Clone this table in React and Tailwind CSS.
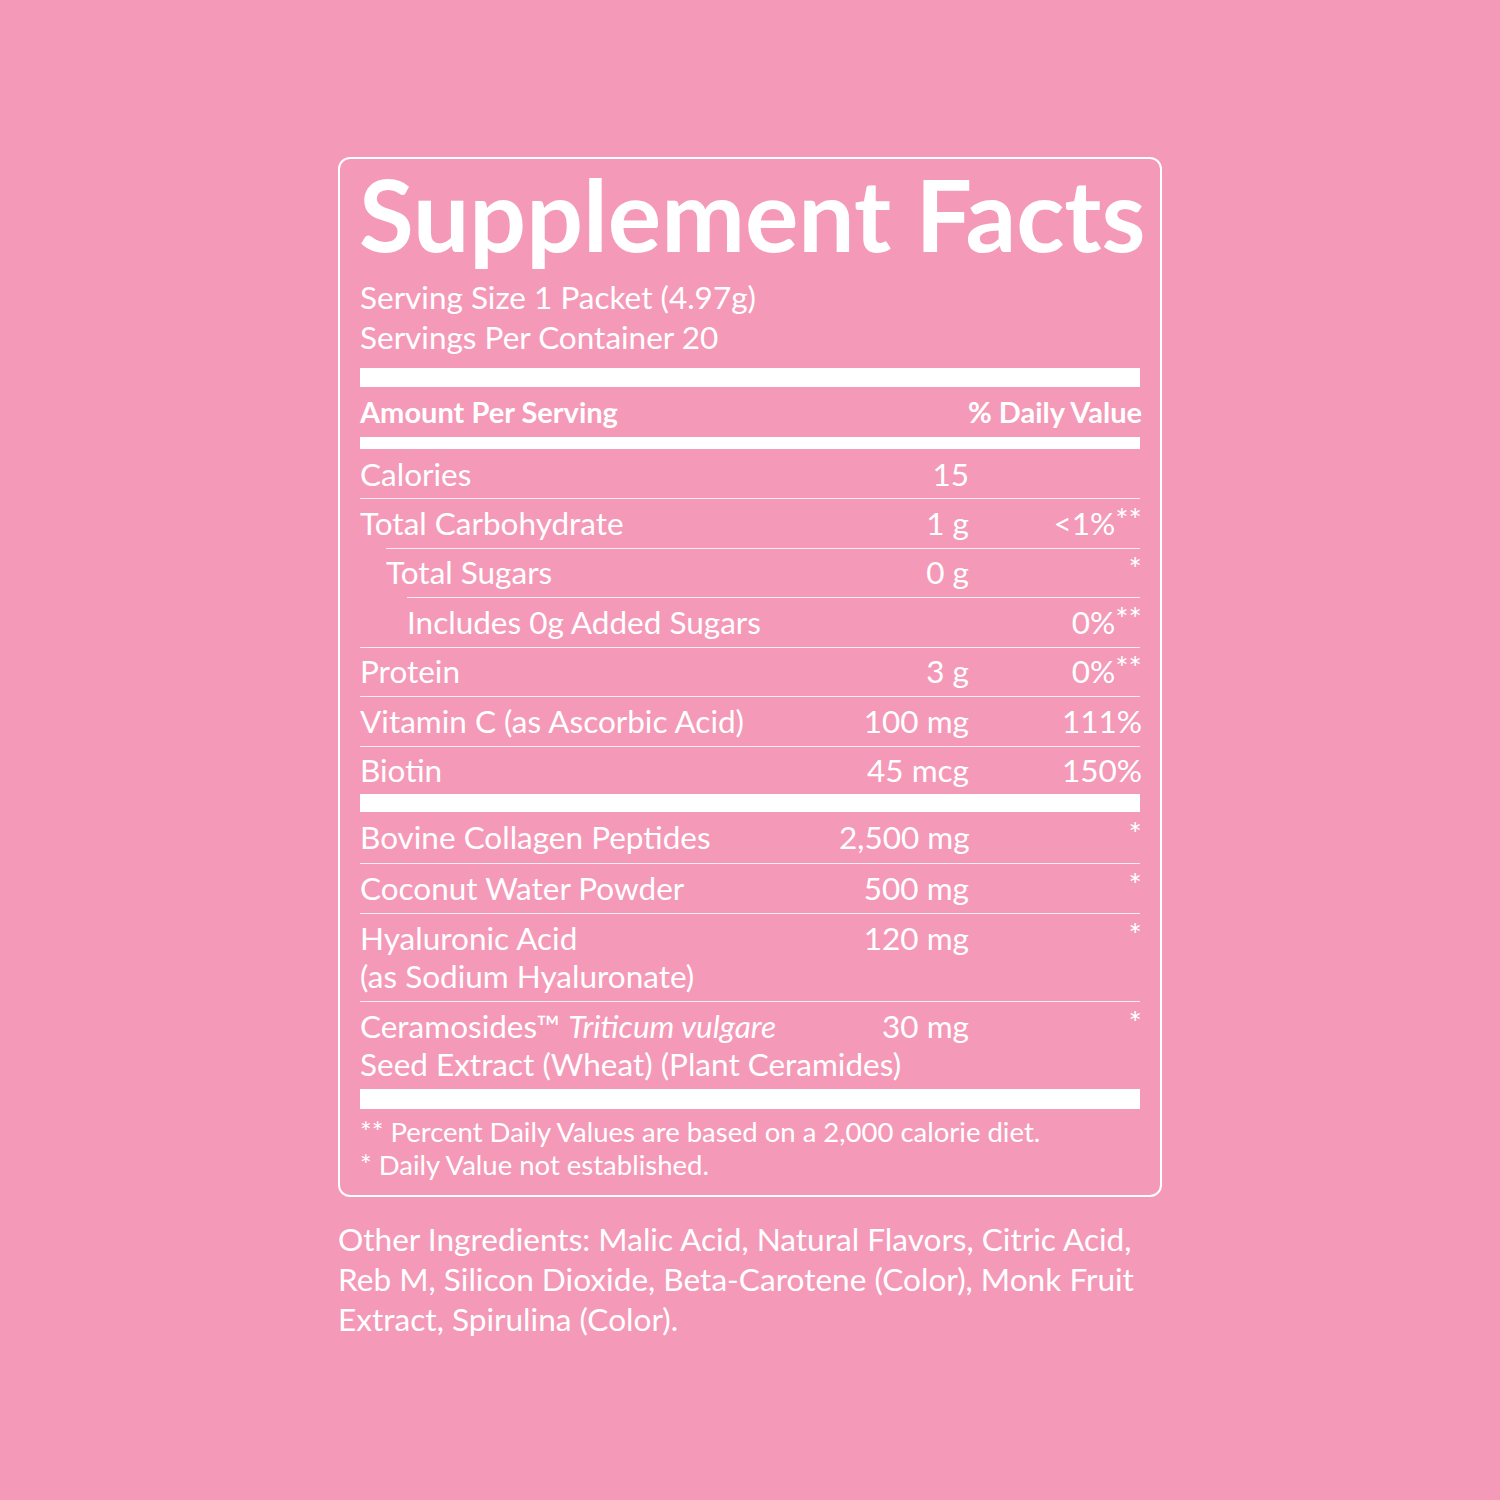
import React from 'react';

const ROWS = [
  { name: 'Total Carbohydrate', amount: '1 g', dv: '<1%', star: '**', indent: '' },
  { name: 'Total Sugars', amount: '0 g', dv: '', star: '*', indent: 'ml-[26px]' },
  { name: 'Includes 0g Added Sugars', amount: '', dv: '0%', star: '**', indent: 'ml-[47px]' },
  { name: 'Protein', amount: '3 g', dv: '0%', star: '**', indent: '' },
  { name: 'Vitamin C (as Ascorbic Acid)', amount: '100 mg', dv: '111%', star: '', indent: '' },
];

const Row = ({ name, amount, dv, star, className = '' }) => (
  <div className={`flex items-center ${className}`}>
    <div className="flex-1 min-w-0 whitespace-nowrap">{name}</div>
    <div className="w-[130px] text-right whitespace-nowrap">{amount}</div>
    <div className="w-[173px] -mr-[2px] text-right whitespace-nowrap">
      {dv}
      {star && <span className="relative -top-[4px]">{star}</span>}
    </div>
  </div>
);

export default function App() {
  return (
    <div
      className="w-[1500px] h-[1500px] bg-[#f49ab8] text-white flex justify-center pt-[157px]"
      style={{ fontFamily: 'Lato, "Liberation Sans", sans-serif' }}
    >
      <div className="w-[824px]">
        {/* ── Facts panel ── */}
        <div className="border-2 border-white rounded-[12px] px-[20px] pb-[14px]">
          <h1 className="text-[100px] font-bold leading-[100px] pt-[4px] h-[116px] -ml-[1px] whitespace-nowrap">
            Supplement Facts
          </h1>
          <div className="text-[31.5px] leading-[40px] pt-[2px]">
            <p>Serving Size 1 Packet (4.97g)</p>
            <p>Servings Per Container 20</p>
          </div>

          <div className="h-[19px] bg-white mt-[11px]" />
          <div className="flex items-center justify-between h-[50px] text-[29px] font-bold -mr-[2px]">
            <span>Amount Per Serving</span>
            <span>% Daily Value</span>
          </div>
          <div className="h-[12px] bg-white" />

          <div className="text-[31.5px]">
            <Row name="Calories" amount="15" className="h-[49px] pt-[3px]" />
            {ROWS.map(r => (
              <Row
                key={r.name}
                {...r}
                className={`h-[49.6px] border-t border-white/80 ${r.indent}`}
              />
            ))}
            <Row name="Biotin" amount="45 mcg" dv="150%" className="h-[48px] border-t border-white/80" />
          </div>

          <div className="h-[18px] bg-white" />

          <div className="text-[31.5px]">
            <Row name="Bovine Collagen Peptides" amount="2,500 mg" star="*" className="h-[51px]" />
            <Row name="Coconut Water Powder" amount="500 mg" star="*" className="h-[50px] border-t border-white/80" />
            <div className="flex items-start h-[88px] border-t border-white/80 pt-[5px] leading-[38px]">
              <div className="flex-1 min-w-0 whitespace-nowrap">
                Hyaluronic Acid<br />(as Sodium Hyaluronate)
              </div>
              <div className="w-[130px] text-right">120 mg</div>
              <div className="w-[173px] -mr-[2px] text-right">
                <span className="relative -top-[4px]">*</span>
              </div>
            </div>
            <div className="flex items-start h-[88px] border-t border-white/80 pt-[5px] leading-[38px]">
              <div className="flex-1 min-w-0 whitespace-nowrap">
                Ceramosides™ <i>Triticum vulgare</i><br />Seed Extract (Wheat) (Plant Ceramides)
              </div>
              <div className="w-[130px] text-right">30 mg</div>
              <div className="w-[173px] -mr-[2px] text-right">
                <span className="relative -top-[4px]">*</span>
              </div>
            </div>
          </div>

          <div className="h-[20px] bg-white" />

          <div className="text-[27.5px] leading-[33px] pt-[6px] whitespace-nowrap">
            <p>** Percent Daily Values are based on a 2,000 calorie diet.</p>
            <p>* Daily Value not established.</p>
          </div>
        </div>

        {/* ── Other ingredients ── */}
        <p className="text-[31.6px] leading-[40px] mt-[22px] w-[810px]">
          Other Ingredients: Malic Acid, Natural Flavors, Citric Acid, Reb M, Silicon Dioxide, Beta-Carotene (Color), Monk Fruit Extract, Spirulina (Color).
        </p>
      </div>
    </div>
  );
}
